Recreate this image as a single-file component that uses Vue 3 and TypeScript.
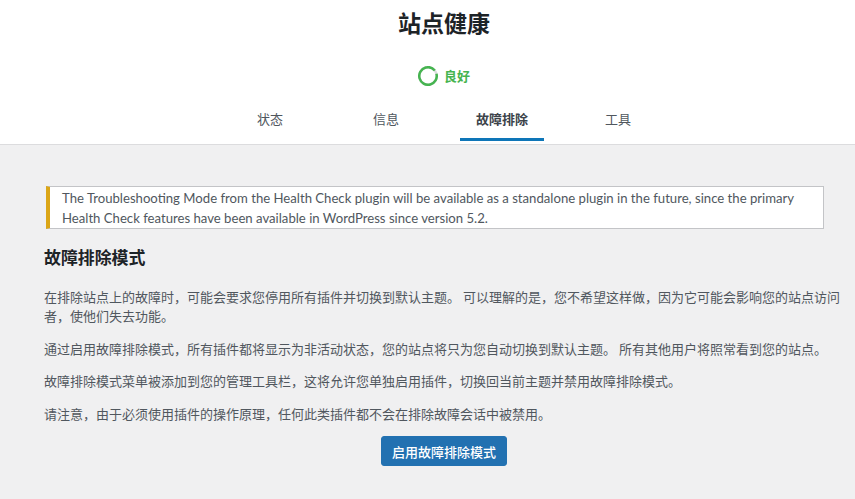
<script setup lang="ts">
const tabs: { label: string; active?: boolean }[] = [
  { label: '状态' },
  { label: '信息' },
  { label: '故障排除', active: true },
  { label: '工具' },
]
const paragraphs: string[] = [
  '在排除站点上的故障时\uFF0C可能会要求您停用所有插件并切换到默认主题。 可以理解的是\uFF0C您不希望这样做\uFF0C因为它可能会影响您的站点访问者\uFF0C使他们失去功能。',
  '通过启用故障排除模式\uFF0C所有插件都将显示为非活动状态\uFF0C您的站点将只为您自动切换到默认主题。 所有其他用户将照常看到您的站点。',
  '故障排除模式菜单被添加到您的管理工具栏\uFF0C这将允许您单独启用插件\uFF0C切换回当前主题并禁用故障排除模式。',
  '请注意\uFF0C由于必须使用插件的操作原理\uFF0C任何此类插件都不会在排除故障会话中被禁用。',
]
</script>

<template>
  <div class="page">
    <header class="head">
      <h1 class="title">站点健康</h1>
      <div class="status">
        <svg class="ring" width="20" height="20" viewBox="0 0 20 20">
          <circle cx="10" cy="10" r="8.75" fill="none" stroke="#dcdcde" stroke-width="2.5" />
          <circle cx="10" cy="10" r="8.75" fill="none" stroke="#46b450" stroke-width="2.5" stroke-dasharray="51 55" transform="rotate(-15 10 10)" />
        </svg>
        <span class="good">良好</span>
      </div>
      <nav class="tabs">
        <div v-for="t in tabs" :key="t.label" class="tab-cell">
          <a class="tab" :class="{ active: t.active }">{{ t.label }}</a>
        </div>
      </nav>
    </header>
    <main class="body">
      <div class="notice">
        The Troubleshooting Mode from the Health Check plugin will be available as a standalone plugin in the future, since the primary Health Check features have been available in WordPress since version 5.2.
      </div>
      <h2 class="sub">故障排除模式</h2>
      <p v-for="p in paragraphs" :key="p" class="para">{{ p }}</p>
      <div class="actions">
        <button class="btn" type="button">启用故障排除模式</button>
      </div>
    </main>
  </div>
</template>

<style scoped>
.page {
  width: 855px;
  height: 499px;
  overflow: hidden;
  display: flex;
  flex-direction: column;
  font-family: "Noto Sans CJK SC", "Noto Sans", sans-serif;
  color: #50575e;
  font-size: 13px;
  background: #f0f0f1;
}
.head {
  background: #fff;
  height: 145px;
  box-sizing: border-box;
  padding: 0 11px 0 44px;
  border-bottom: 1px solid #dcdcde;
  display: flex;
  flex-direction: column;
  align-items: center;
  flex: none;
}
.title {
  margin: 8px 0 0;
  height: 29px;
  font-size: 23px;
  line-height: 29px;
  font-weight: 600;
  color: #1d2327;
}
.status {
  margin-top: 29px;
  height: 20px;
  display: flex;
  align-items: center;
  gap: 6px;
  font-weight: 600;
  color: #46b450;
}
.ring {
  display: block;
}
.good {
  font-size: 13px;
  line-height: 18px;
}
.tabs {
  margin-top: 14px;
  display: grid;
  grid-template-columns: repeat(4, 116px);
  height: 41px;
}
.tab-cell {
  display: flex;
  justify-content: center;
}
.tab {
  padding: 0 16px;
  height: 41px;
  box-sizing: border-box;
  line-height: 38px;
  color: #50575e;
}
.tab.active {
  font-weight: 600;
  color: #3c434a;
  border-bottom: 3px solid #0e76b8;
}
.body {
  padding: 41px 11px 0 44px;
  flex: 1;
}
.notice {
  margin: 0 20px 0 2px;
  background: #fff;
  border: 1px solid #c3c4c7;
  border-left: 4px solid #dba617;
  padding: 1px 12px 0;
  line-height: 20px;
  font-family: "Lato", "Noto Sans", sans-serif;
  font-size: 13.15px;
}
.sub {
  margin: 16px 0 0;
  font-size: 16.9px;
  line-height: 24px;
  font-weight: 600;
  color: #1d2327;
}
.para {
  margin: 17.5px 0 13px;
  line-height: 19.5px;
}
.para + .para {
  margin-top: 13px;
}
.actions {
  display: flex;
  justify-content: center;
  margin-top: 12px;
}
.btn {
  background: #2271b1;
  color: #fff;
  border: 1px solid #2271b1;
  border-radius: 3px;
  height: 30px;
  padding: 0 10px;
  font: inherit;
  font-weight: 500;
}
</style>
